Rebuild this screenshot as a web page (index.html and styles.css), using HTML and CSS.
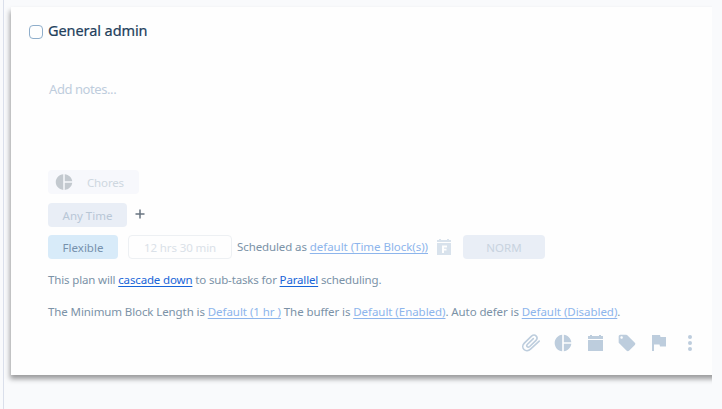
FILE: index.html
```
<!DOCTYPE html>
<html lang="en">
<head>
<meta charset="utf-8">
<title>General admin</title>
<link rel="stylesheet" href="styles.css">
</head>
<body>
<main class="pane">
  <section class="card">
    <header class="head"><span class="check"></span><h1 class="title">General admin</h1></header>
    <div class="notes">Add notes...</div>
    <div class="row row-category">
      <span class="pill chores"><svg width="18" height="18" viewBox="0 0 24 24"><path d="M11 1.500v21c-5.600-.5-10-5-10-10.500s4.400-10 10-10.500zm2 0v9.500h10c-.5-5-4.700-9-10-9.500zm0 11.500v9.500c5.300-.5 9.500-4.500 10-9.500z"/></svg><span>Chores</span></span>
    </div>
    <div class="row row-time">
      <span class="pill anytime">Any Time</span>
      <svg class="plus" width="10" height="10" viewBox="0 0 10 10"><path d="M5 .5v9M.5 5h9"/></svg>
    </div>
    <div class="row row-schedule">
      <span class="pill flexible">Flexible</span>
      <span class="pill duration">12 hrs 30 min</span>
      <span class="text scheduled">Scheduled as <a class="link soft">default (Time Block(s))</a></span>
      <svg class="fixed" width="14" height="17" viewBox="0 0 14 17"><path d="M0 1h2V0h2v1h6V0h2v1h2v2H0zM0 4h14v12H0z"/><path class="mark" d="M5 6.500h5v2H7v1.300h2.500v1.700H7V14H5z"/></svg>
      <span class="pill norm">NORM</span>
    </div>
    <p class="text plan">This plan will <a class="link">cascade down</a> to sub-tasks for <a class="link">Parallel</a> scheduling.</p>
    <p class="text block">The Minimum Block Length is <a class="link soft">Default (1 hr )</a> The buffer is <a class="link soft">Default (Enabled)</a>. Auto defer is <a class="link soft">Default (Disabled)</a>.</p>
    <footer class="tools">
      <svg width="20" height="20" viewBox="0 0 20 20"><path class="clip" d="M18.200 8.100 9.500 16.200C7.500 18.100 4.700 18.200 3 16.500S1.400 12 3.300 10.100L10.500 3.200C12 1.900 14 1.800 15.200 3.100S16.300 6 15 7.400L8.700 13.500C7.800 14.300 6.800 14.300 6.200 13.700S5.700 12 6.500 11.200L12.300 5.600"/></svg>
      <svg width="20" height="20" viewBox="0 0 24 24"><path d="M11 2v20c-5.100-.5-9-4.800-9-10s3.900-9.500 9-10zm2 0v9h9c-.5-4.700-4.300-8.500-9-9zm0 11v9c4.700-.5 8.500-4.300 9-9z"/></svg>
      <svg width="20" height="20" viewBox="0 0 20 20"><path d="M3 3h2V2h2v1h7V2h2v1h2v3H3zM3 7h15v11H3z"/></svg>
      <svg width="20" height="20" viewBox="0 0 24 24"><path d="M21.400 11.600l-9-9C12.100 2.200 11.600 2 11 2H4c-1.100 0-2 .9-2 2v7c0 .6.200 1.100.6 1.400l9 9c.4.400.9.600 1.400.6s1.100-.2 1.400-.6l7-7c.4-.4.6-.9.6-1.400s-.2-1-.6-1.400zM5.500 7C4.700 7 4 6.300 4 5.500S4.700 4 5.500 4 7 4.700 7 5.500 6.300 7 5.500 7z"/></svg>
      <svg width="20" height="20" viewBox="0 0 20 20"><path d="M3 2h8l.5 2H17v9.500h-6l-.5-2H5V18H3z"/></svg>
      <svg class="more" width="20" height="20" viewBox="0 0 20 20"><circle cx="10" cy="4" r="2"/><circle cx="10" cy="10" r="2"/><circle cx="10" cy="16" r="2"/></svg>
    </footer>
  </section>
</main>
</body>
</html>
```
FILE: styles.css
```
* { box-sizing: border-box; }
body {
  margin: 0;
  height: 409px;
  overflow: hidden;
  background: #f9fafc;
  font-family: "Noto Sans", sans-serif;
  font-size: 11.5px;
}
.pane {
  width: 709px;
  height: 409px;
  margin-left: 3px;
  padding: 7px 0 0 7px;
  border-left: 1px solid #dadfeb;
  overflow: hidden;
}
.card {
  display: flex;
  flex-direction: column;
  width: 720px;
  height: 368px;
  padding: 13px 18px 0 37px;
  background: #fefefe;
  box-shadow: -1px 4px 5px 0 rgba(0, 0, 0, .38);
}
.head { display: flex; align-items: center; height: 20px; margin-left: -19px; }
.check { width: 14px; height: 14px; margin: 4px 5px 0 0; border: 1px solid #8faecb; border-radius: 4px; }
.title { margin: 0; color: #233f5c; font-size: 14.5px; font-weight: 400; line-height: 20px; letter-spacing: -.08px; -webkit-text-stroke: .2px #233f5c; }
.notes { height: 20px; margin-top: 39px; padding-left: 1px; color: #becddd; font-size: 13px; line-height: 20px; letter-spacing: -.42px; }
.row { display: flex; align-items: center; height: 24px; }
.row-category { margin-top: 71px; }
.row-time { margin-top: 9px; }
.row-schedule { margin-top: 8px; }
.pill { display: flex; align-items: center; justify-content: center; height: 24px; padding-top: 1px; border-radius: 4px; line-height: 15px; white-space: nowrap; }
.chores { width: 91px; justify-content: flex-start; padding-left: 7px; background: #f7f8fc; color: #ced7e0; letter-spacing: -.15px; }
.chores svg { margin: -1px 14px 0 0; fill: #c3c9cf; }
.anytime { width: 79px; background: #e9eef6; color: #b8c7d6; }
.plus { margin: -3px 0 0 8px; fill: none; stroke: #687480; stroke-width: 1.5; }
.flexible { width: 70px; background: #d8ebf9; color: #7691ac; }
.duration { width: 104px; margin-left: 10px; border: 1px solid #edf0f3; color: #dae1e8; letter-spacing: -.1px; }
.scheduled { margin-left: 5px; width: 200px; }
.fixed { fill: #d8e2ec; }
.fixed .mark { fill: #fefefe; }
.norm { width: 82px; margin-left: 12px; background: #e9eef6; color: #c8d3df; }
.text { height: 20px; margin-top: 0; margin-bottom: 0; color: #7b92a7; line-height: 20px; letter-spacing: -.1px; white-space: nowrap; }
.plan { margin-top: 11px; letter-spacing: -.15px; }
.block { margin-top: 12px; }
.link { color: #1764d8; text-decoration: underline; text-underline-offset: 2px; }
.soft { color: #8db5ec; letter-spacing: -.04px; }
.tools { display: flex; gap: 12px; margin: 11px 0 0 473px; fill: #bdcddd; }
.tools svg { flex: none; }
.tools .more { margin-left: -1px; }
.clip { fill: none; stroke: #bdcddd; stroke-width: 1.6; stroke-linecap: round; }
```
